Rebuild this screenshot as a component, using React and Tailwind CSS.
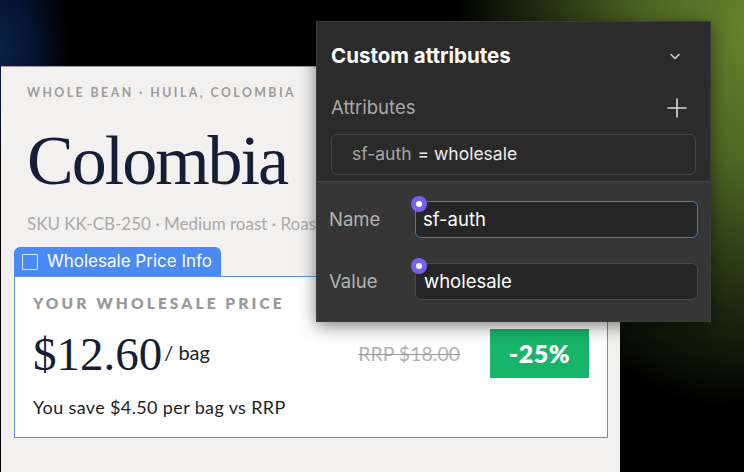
import React from "react";

function Dot() {
  return (
    <span className="absolute -left-[5px] -top-[6px] flex h-[16px] w-[16px] items-center justify-center rounded-full bg-[#7a5ff0]">
      <span className="h-[6px] w-[6px] rounded-full bg-white" />
    </span>
  );
}

export default function App() {
  return (
    <div className="relative h-[472px] w-[744px] overflow-hidden bg-black bg-[radial-gradient(ellipse_300px_380px_at_750px_30px,#66822e_0%,#4d6624_35%,#222e12_70%,transparent_100%),radial-gradient(ellipse_70px_110px_at_0px_50px,#0a2246_0%,#051330_50%,transparent_100%)]">
      {/* Product card */}
      <div className="ml-px mt-[66px] h-[406px] w-[619px] border-t border-[#9a9a9a] bg-[#f2f1ef] pl-[26px] pt-[18px] font-['Lato',sans-serif]">
        <div className="text-[12.3px] font-bold leading-[16px] tracking-[0.2em] text-[#9b9b9b]">
          WHOLE BEAN · HUILA, COLOMBIA
        </div>
        <div className="mt-[25px] font-['Liberation_Serif',serif] text-[70px] leading-[70px] tracking-[-2px] text-[#141e36]">
          Colombia
        </div>
        <div className="mt-[16px] text-[17px] leading-[24px] text-[#a9a9a9] whitespace-nowrap">
          SKU KK-CB-250 · Medium roast · Roasted weekly
        </div>

        {/* Component selection */}
        <div className="-ml-[13px] mt-[11px] w-[594px]">
          <div className="flex h-[29px] w-[207px] items-center gap-[9px] rounded-t-[6px] bg-[#4a8af4] pl-[8px] font-['Inter',sans-serif] text-[17px] text-white">
            <span className="h-[16px] w-[16px] rounded-[1px] border-[1.5px] border-[#dce8fd]" />
            <span className="leading-none">Wholesale Price Info</span>
          </div>
          <div className="h-[162px] border-[1.5px] border-[#5b93e8] bg-white px-[18px] pt-[16px]">
            <div className="text-[15.5px] font-extrabold leading-[20px] tracking-[0.2em] text-[#9a9a9a]">
              YOUR WHOLESALE PRICE
            </div>
            <div className="mt-[16px] flex h-[49px] items-center justify-between">
              <div className="flex items-start">
                <span className="mt-[2px] font-['Liberation_Serif',serif] text-[47px] leading-[49px] text-[#141e36]">
                  $12.60
                </span>
                <span className="ml-[2px] mt-[14px] text-[20px] leading-[20px] text-[#222]">/ bag</span>
              </div>
              <div className="flex items-center gap-[30px]">
                <span className="text-[19.5px] text-[#b2b2b2] line-through decoration-[#9a9a9a]">
                  RRP $18.00
                </span>
                <span className="flex h-[49px] w-[99px] items-center justify-center bg-[#16b56a] text-[25px] font-extrabold tracking-[0.02em] text-white">
                  -25%
                </span>
              </div>
            </div>
            <div className="mt-[17px] text-[18px] leading-[24px] tracking-[0.02em] text-[#1e1e1e]">
              You save $4.50 per bag vs RRP
            </div>
          </div>
        </div>
      </div>

      {/* Attributes panel */}
      <div className="absolute left-[316px] top-[21px] w-[395px] border border-[#3c3c3c] bg-[#2b2b2b] font-['Inter',sans-serif] shadow-[0_4px_16px_rgba(0,0,0,0.5)]">
        <div className="px-[14px] pb-[6px] pt-[22px]">
          <div className="flex h-[24px] items-center justify-between">
            <span className="text-[20.5px] font-bold text-white">Custom attributes</span>
            <svg width="14" height="10" viewBox="0 0 14 10" className="mr-[14px]" fill="none" stroke="#cfcfcf" strokeWidth="1.6" strokeLinecap="round" strokeLinejoin="round">
              <path d="M3 3.5l4 4 4-4" />
            </svg>
          </div>
          <div className="mt-[28px] flex h-[24px] items-center justify-between">
            <span className="text-[18.5px] text-[#a9a9a9]">Attributes</span>
            <svg width="22" height="22" viewBox="0 0 22 22" className="mr-[8px]" fill="none" stroke="#d8d8d8" strokeWidth="1.6" strokeLinecap="round">
              <path d="M11 2v18M2 11h18" />
            </svg>
          </div>
          <div className="mt-[14px] flex h-[41px] items-center rounded-[6px] border border-[#464646] bg-[#2a2a2a] pl-[20px] text-[17.5px]">
            <span className="text-[#a6a6a6]">sf-auth</span>
            <span className="ml-[6px] text-[#ececec]">= wholesale</span>
          </div>
        </div>
        <div className="border-t border-[#444] bg-[#363636] px-[12px] pb-[21px] pt-[19px]">
          <div className="flex items-center">
            <span className="w-[86px] text-[18.5px] text-[#b3b3b3]">Name</span>
            <div className="relative flex h-[37px] flex-1 items-center rounded-[6px] border-[1.5px] border-[#3d7de0] bg-[#262626] pl-[7px] text-[18.5px] text-white">
              <Dot />
              sf-auth
            </div>
          </div>
          <div className="mt-[25px] flex items-center">
            <span className="w-[86px] text-[18.5px] text-[#b3b3b3]">Value</span>
            <div className="relative flex h-[37px] flex-1 items-center rounded-[6px] border border-[#4a4a4a] bg-[#262626] pl-[8px] text-[18.5px] text-white">
              <Dot />
              wholesale
            </div>
          </div>
        </div>
      </div>
    </div>
  );
}
